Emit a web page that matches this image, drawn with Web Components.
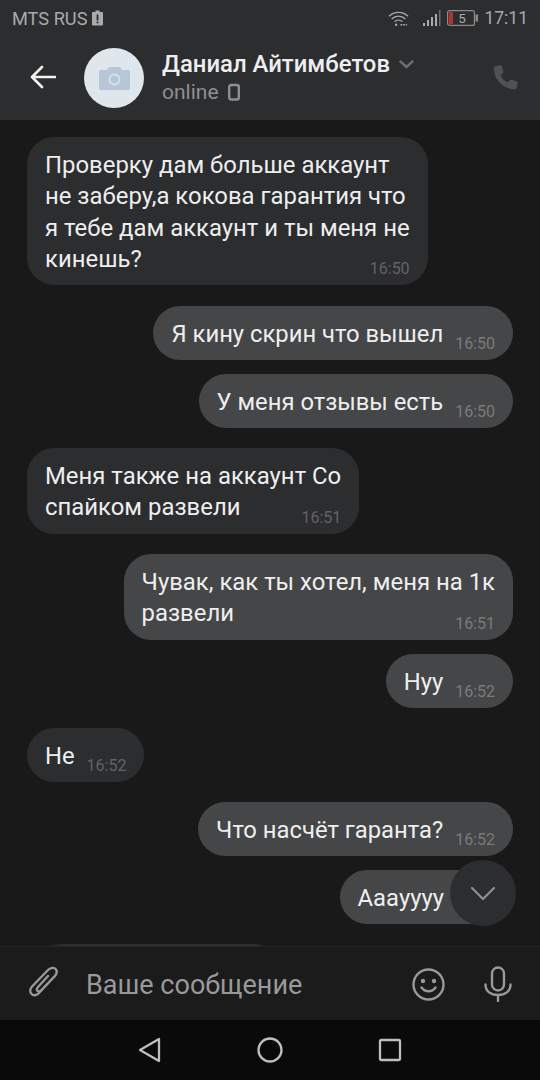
<!DOCTYPE html>
<html lang="ru">
<head>
<meta charset="utf-8">
<title>Чат</title>
<style>
  html, body { margin: 0; background: #19191a; }
  body { font-family: Roboto, "Noto Sans", sans-serif; }
</style>
</head>
<body>
<chat-app>
  <status-bar slot="top"></status-bar>
  <chat-header slot="top" name="Даниал Айтимбетов" status="online"></chat-header>

  <chat-msg time="16:50" multi>Проверку дам больше аккаунт<br>не заберу,а кокова гарантия что<br>я тебе дам аккаунт и ты меня не<br>кинешь?</chat-msg>
  <chat-msg out time="16:50" style="margin-top:21px">Я кину скрин что вышел</chat-msg>
  <chat-msg out time="16:50" style="margin-top:14px">У меня отзывы есть</chat-msg>
  <chat-msg time="16:51" multi style="margin-top:20px">Меня также на аккаунт Со<br>спайком развели</chat-msg>
  <chat-msg out time="16:51" multi style="margin-top:20.500px">Чувак, как ты хотел, меня на 1к<br>развели</chat-msg>
  <chat-msg out time="16:52" style="margin-top:14.500px">Нуу</chat-msg>
  <chat-msg time="16:52" style="margin-top:20px">Не</chat-msg>
  <chat-msg out time="16:52" style="margin-top:20px">Что насчёт гаранта?</chat-msg>
  <chat-msg out style="margin-top:14px">Аааyyyy</chat-msg>
  <chat-peek></chat-peek>

  <scroll-down slot="over"></scroll-down>
  <chat-composer slot="bottom" placeholder="Ваше сообщение"></chat-composer>
  <nav-bar slot="bottom"></nav-bar>
</chat-app>

<script>
(function () {
  // small helper: every element is just a shadow root filled once
  function define(tag, html) {
    customElements.define(tag, class extends HTMLElement {
      connectedCallback() {
        if (this.shadowRoot) return;
        const root = this.attachShadow({ mode: 'open' });
        root.innerHTML = typeof html === 'function' ? html(this) : html;
      }
    });
  }

  define('chat-app', `
    <style>
      :host { display: flex; flex-direction: column; width: 540px; height: 1080px; overflow: hidden; background: #19191a; }
      .top { background: #2c2d2f; flex: none; }
      .list { position: relative; flex: 1; min-height: 0; overflow: hidden; }
      .scroll { display: flex; flex-direction: column; padding: 17px 27px 0 27px; }
      .bottom { flex: none; }
    </style>
    <div class="top"><slot name="top"></slot></div>
    <div class="list">
      <div class="scroll"><slot></slot></div>
      <slot name="over"></slot>
    </div>
    <div class="bottom"><slot name="bottom"></slot></div>`);

  define('status-bar', `
    <style>
      :host { display: flex; align-items: center; height: 36px; padding: 0 12px 0 12px; color: #a9aaab; font-size: 18.200px; }
      svg { display: block; flex: none; }
      .sp { flex: 1; }
      .time { font-size: 17.500px; margin-left: 6px; }
    </style>
    <span>MTS RUS</span>
    <svg style="margin-left:5px" width="11" height="16" viewBox="0 0 11 15">
      <path d="M3.500 0h4v1.500H10a1 1 0 0 1 1 1V14a1 1 0 0 1-1 1H1a1 1 0 0 1-1-1V2.500a1 1 0 0 1 1-1h2.500z" fill="#a9aaab"/>
      <rect x="4.600" y="4" width="1.800" height="6" fill="#2c2d2f"/>
      <rect x="4.600" y="11" width="1.800" height="1.800" fill="#2c2d2f"/>
    </svg>
    <span class="sp"></span>
    <svg width="21" height="17" viewBox="0 0 22 17" fill="none" stroke="#a9aaab" stroke-width="1.300">
      <path d="M1 6.200C6.500 .6 15.500 .6 21 6.200"/>
      <path d="M3.800 9C7.800 5 14.200 5 18.200 9"/>
      <path d="M6.800 11.800C9.200 9.500 12.800 9.500 15.200 11.800"/>
      <circle cx="8.500" cy="15" r="1.300" fill="#a9aaab" stroke="none"/>
      <path d="M13 15h7" stroke-width="1.600" stroke-dasharray="2 1"/>
    </svg>
    <svg style="margin-left:14px" width="18" height="17" viewBox="0 0 18 17" fill="#a9aaab">
      <rect x="0" y="13" width="2" height="3"/>
      <rect x="4" y="10" width="2" height="6"/>
      <rect x="8" y="7" width="2" height="9"/>
      <rect x="12" y="4" width="2" height="12"/>
      <rect x="16" y="0" width="1.500" height="16" fill="#6c6d6e"/>
    </svg>
    <svg style="margin-left:6px" width="31" height="16" viewBox="0 0 31 16">
      <rect x=".6" y=".6" width="26.800" height="14.800" rx="2" fill="none" stroke="#8a8b8c" stroke-width="1.200"/>
      <rect x="2" y="2" width="4" height="12" fill="#b3312d"/>
      <rect x="28.500" y="4.500" width="2.500" height="7" fill="#8a8b8c"/>
      <text x="15" y="13" text-anchor="middle" font-size="13.500" font-family="Roboto, sans-serif" fill="#a9aaab">5</text>
    </svg>
    <span class="time">17:11</span>`);

  define('chat-header', (el) => `
    <style>
      :host { display: flex; align-items: flex-start; height: 84px; padding-top: 12px; box-sizing: border-box; }
      svg { display: block; flex: none; }
      .back { margin: 17px 0 0 30px; }
      .ava { width: 60px; height: 60px; border-radius: 50%; background: #dfe6ec; margin-left: 28px; flex: none;
             display: flex; align-items: center; justify-content: center; }
      .who { margin-left: 18px; flex: 1; min-width: 0; }
      .name { display: flex; align-items: center; font-size: 23.900px; font-weight: 500; line-height: 30px; color: #eeeeef; margin-top: 1px; white-space: nowrap; }
      .name svg { margin: 0 0 0 9px; }
      .st { display: flex; align-items: center; font-size: 21px; line-height: 26px; color: #8e8f91; margin-top: 0; }
      .st svg { margin-left: 9px; }
      .call { margin: 17px 22px 0 0; }
    </style>
    <svg class="back" width="26" height="24" viewBox="0 0 26 24" fill="none" stroke="#f2f2f2" stroke-width="2.600" stroke-linecap="round" stroke-linejoin="round">
      <path d="M25 12H2M12 2 2 12l10 10"/>
    </svg>
    <div class="ava">
      <svg width="31" height="23" viewBox="0 0 31 23">
        <path d="M2 3h6l2-3h11l2 3h6a2 2 0 0 1 2 2v16a2 2 0 0 1-2 2H2a2 2 0 0 1-2-2V5a2 2 0 0 1 2-2z" fill="#b7c7d8"/>
        <circle cx="15.500" cy="12.500" r="5" fill="none" stroke="#dfe6ec" stroke-width="1.800" opacity=".85"/>
      </svg>
    </div>
    <div class="who">
      <div class="name">${el.getAttribute('name')}
        <svg width="15" height="9" viewBox="0 0 15 9" fill="none" stroke="#6c6d6f" stroke-width="2.400" stroke-linecap="round" stroke-linejoin="round"><path d="M1.500 1.500 7.500 7l6-5.500"/></svg>
      </div>
      <div class="st">${el.getAttribute('status')}
        <svg width="12" height="18" viewBox="0 0 12 18" fill="none" stroke="#8e8f91" stroke-width="2.400"><rect x="1.200" y="2" width="9.600" height="14.500" rx="2"/></svg>
      </div>
    </div>
    <svg class="call" width="26" height="26" viewBox="0 0 26 26">
      <path d="M3.500 1.200 7.800 .3c1-.2 1.800.3 2.100 1.200l1.500 5c.2.800 0 1.500-.6 2L8.500 10.300c1.300 3 3.900 5.600 7.200 7.200l1.800-2.200c.6-.6 1.300-.8 2-.6l5 1.500c.9.300 1.400 1.100 1.200 2.100l-.9 4.300c-.2 1-1 1.700-2 1.700C11.300 24 2 14.700 1.800 3.200c0-1 .7-1.800 1.700-2z" fill="#505153"/>
    </svg>`);

  define('chat-msg', (el) => {
    const time = el.getAttribute('time');
    return `
    <style>
      :host { display: flex; justify-content: flex-start; flex: none; }
      :host([out]) { justify-content: flex-end; }
      .b { background: #2c2d2f; color: #eeeeef; border-radius: 27px; padding: 13px 18px 10px 18px;
           font-size: 23.800px; line-height: 31px; white-space: nowrap; display: flex; align-items: flex-end; gap: 12px; }
      :host([out]) .b { background: #454647; }
      :host([multi]) .b { display: grid; font-size: 23.900px; line-height: 31.250px; }
      :host([multi]) .t, :host([multi]) .m { grid-area: 1 / 1; }
      :host([multi]) .m { justify-self: end; align-self: end; }
      .m { font-size: 16px; line-height: 19px; color: #626365; min-width: 39px; margin-bottom: -3px; text-align: right; }
      :host([out]) .m { color: #7a7b7c; }
    </style>
    <div class="b"><span class="t"><slot></slot></span><span class="m">${time || ''}</span></div>`;
  });

  // top edge of the next message, cut off by the composer
  define('chat-peek', `
    <style>
      :host { display: block; width: 235px; height: 40px; margin: 20px 0 0 13px; background: #2c2d2f; border-radius: 27px; flex: none; }
    </style>`);

  define('scroll-down', `
    <style>
      :host { position: absolute; left: 450px; top: 740px; width: 66px; height: 66px; border-radius: 50%; background: #2c2d2f;
              display: flex; align-items: center; justify-content: center; }
      svg { display: block; }
    </style>
    <svg width="26" height="15" viewBox="0 0 26 15" fill="none" stroke="#8f9092" stroke-width="2.200" stroke-linecap="round" stroke-linejoin="round">
      <path d="M2 2l11 11L24 2"/>
    </svg>`);

  define('chat-composer', (el) => `
    <style>
      :host { display: flex; align-items: center; height: 74px; box-sizing: border-box; background: #1b1b1c; border-top: 1px solid #242425; padding: 1px 28px 0 26px; }
      svg { display: block; flex: none; }
      .ph { margin-left: 28px; padding-top: 2px; font-size: 27px; color: #98999b; flex: 1; }
      .mic { margin-left: 39px; }
    </style>
    <svg width="32" height="36" viewBox="0 0 32 36" fill="none" stroke="#98999b" stroke-width="2.400" stroke-linecap="round">
      <path d="M27 12 13 27c-2.500 2.700-5.500 2.900-7.400 1s-1.800-5 .5-7.500L21.500 4.500c3-3.200 6.800-3.300 8.300-1.300 1.600 2 .8 5-1.500 7.500L15.500 24c-1.500 1.500-3 1.700-4 .8s-.8-2.500.7-4.100L22 10"/>
    </svg>
    <span class="ph">${el.getAttribute('placeholder')}</span>
    <svg width="33" height="33" viewBox="0 0 33 33" fill="none" stroke="#98999b" stroke-width="2.400" stroke-linecap="round">
      <circle cx="16.500" cy="16.500" r="15"/>
      <path d="M9.500 19.500c3.500 5 10.500 5 14 0"/>
      <circle cx="11" cy="13" r="2.200" fill="#98999b" stroke="none"/>
      <circle cx="22" cy="13" r="2.200" fill="#98999b" stroke="none"/>
    </svg>
    <svg class="mic" width="28" height="36" viewBox="0 0 28 36" fill="none" stroke="#98999b" stroke-width="2.400" stroke-linecap="round">
      <rect x="8" y="1.500" width="12" height="23" rx="6"/>
      <path d="M1.500 18.500c0 7 5.500 10.500 12.500 10.500s12.500-3.500 12.500-10.500M14 29v6"/>
    </svg>`);

  define('nav-bar', `
    <style>
      :host { display: flex; align-items: center; justify-content: center; height: 60px; background: #0a0a0a; gap: 95px; }
      svg { display: block; flex: none; }
    </style>
    <svg width="24" height="26" viewBox="0 0 24 26" fill="none" stroke="#bdbebf" stroke-width="2.300" stroke-linejoin="round"><path d="M21 2v22L2 13z"/></svg>
    <svg width="26" height="26" viewBox="0 0 26 26" fill="none" stroke="#bdbebf" stroke-width="2.300"><circle cx="13" cy="13" r="11.500"/></svg>
    <svg width="24" height="24" viewBox="0 0 24 24" fill="none" stroke="#bdbebf" stroke-width="2.300" stroke-linejoin="round"><rect x="2" y="2" width="20" height="20" rx="1"/></svg>`);
})();
</script>
</body>
</html>
